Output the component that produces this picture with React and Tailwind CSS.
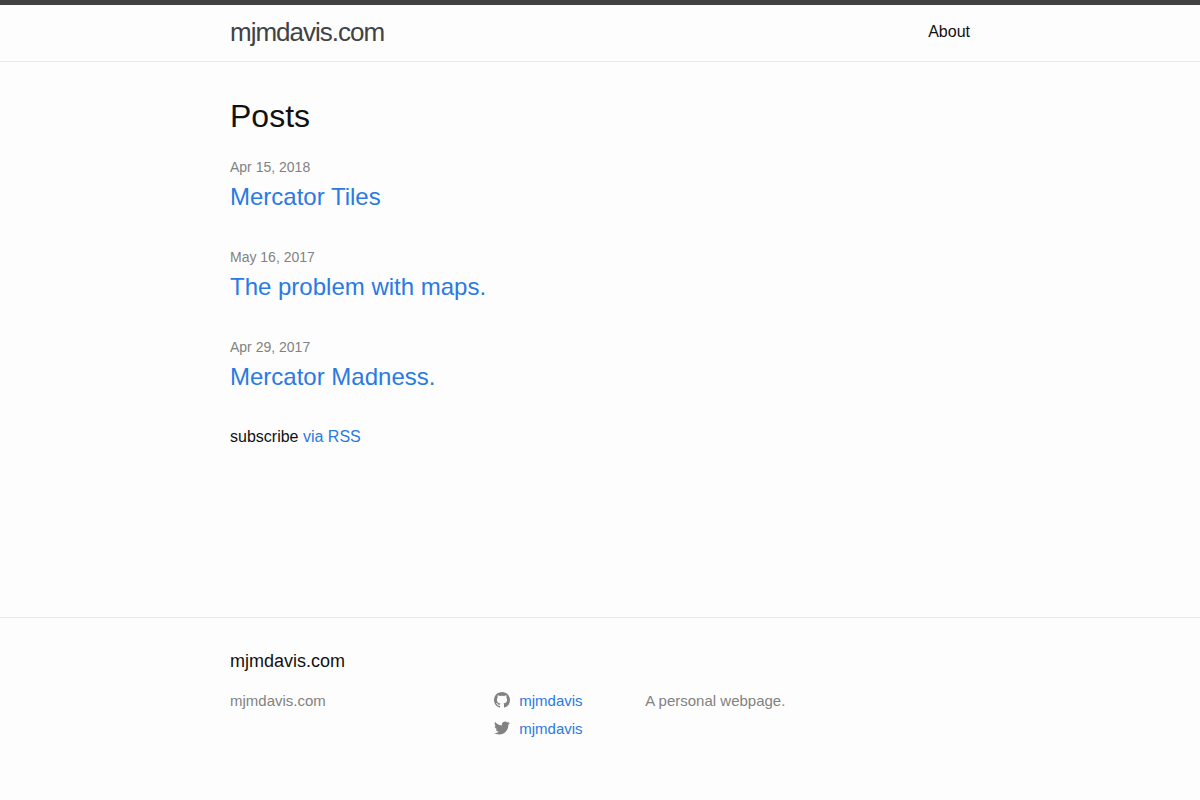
const posts = [
  { date: "Apr 15, 2018", title: "Mercator Tiles" },
  { date: "May 16, 2017", title: "The problem with maps." },
  { date: "Apr 29, 2017", title: "Mercator Madness." },
];

const GithubIcon = () => (
  <svg viewBox="0 0 16 16" aria-hidden="true" className="w-4 h-4 fill-[#828282]">
    <path
      fillRule="evenodd"
      clipRule="evenodd"
      d="M8 0C3.58 0 0 3.58 0 8c0 3.54 2.29 6.53 5.47 7.59.4.07.55-.17.55-.38 0-.19-.01-.82-.01-1.49-2.01.37-2.53-.49-2.69-.94-.09-.23-.48-.94-.82-1.13-.28-.15-.68-.52-.01-.53.63-.01 1.08.58 1.23.82.72 1.21 1.87.87 2.33.66.07-.52.28-.87.51-1.07-1.78-.2-3.64-.89-3.64-3.95 0-.87.31-1.59.82-2.15-.08-.2-.36-1.02.08-2.12 0 0 .67-.21 2.2.82.64-.18 1.32-.27 2-.27s1.36.09 2 .27c1.53-1.04 2.2-.82 2.2-.82.44 1.1.16 1.92.08 2.12.51.56.82 1.27.82 2.15 0 3.07-1.87 3.75-3.65 3.95.29.25.54.73.54 1.48 0 1.07-.01 1.93-.01 2.2 0 .21.15.46.55.38A8.01 8.01 0 0 0 16 8c0-4.42-3.58-8-8-8z"
    />
  </svg>
);

const TwitterIcon = () => (
  <svg viewBox="0 0 16 16" aria-hidden="true" className="w-4 h-4 fill-[#828282]">
    <path d="M15.969 3.058c-.586.26-1.217.436-1.878.515.675-.405 1.194-1.045 1.438-1.809-.632.375-1.332.647-2.076.793-.596-.636-1.446-1.033-2.387-1.033-1.806 0-3.27 1.464-3.27 3.27 0 .256.029.506.085.745C5.163 5.404 2.753 4.102 1.14 2.124c-.281.482-.442 1.044-.442 1.643 0 1.134.577 2.135 1.455 2.722-.536-.017-1.04-.164-1.481-.409v.041c0 1.584 1.127 2.906 2.623 3.206-.274.075-.563.115-.861.115-.211 0-.416-.021-.615-.059.416 1.299 1.624 2.245 3.055 2.271-1.119.877-2.529 1.4-4.061 1.4-.264 0-.524-.015-.78-.046 1.447.928 3.166 1.469 5.013 1.469 6.015 0 9.304-4.983 9.304-9.304 0-.142-.003-.283-.009-.423.639-.461 1.194-1.037 1.632-1.692z" />
  </svg>
);

const socials = [
  { name: "github", icon: GithubIcon, username: "mjmdavis" },
  { name: "twitter", icon: TwitterIcon, username: "mjmdavis" },
];

const Header = () => (
  <header className="border-t-5 border-b border-t-[#424242] border-b-[#e8e8e8]">
    <div className="max-w-[800px] mx-auto px-[30px] pb-[2px] flex justify-between leading-[54px]">
      <a href="#home" className="text-[26px] leading-[54px] tracking-[-1px] text-[#424242]">
        mjmdavis.com
      </a>
      <nav>
        <a href="#about">About</a>
      </nav>
    </div>
  </header>
);

const Footer = () => (
  <footer className="border-t border-[#e8e8e8] py-[30px]">
    <div className="max-w-[800px] mx-auto px-[30px]">
      <h2 className="text-lg leading-[27px] mb-[15px]">mjmdavis.com</h2>
      <div className="flex -ml-[15px] pb-[30px] text-[15px] leading-[22px] text-[#828282]">
        <p className="w-[35%] pl-[15px]">mjmdavis.com</p>
        <ul className="w-1/5 pl-[15px] space-y-[6px]">
          {socials.map(({ name, icon: Icon, username }) => (
            <li key={name} className="flex">
              <a href={`#${name}`} className="flex items-start gap-[9px] text-[#2a7ae2]">
                <span className="pt-[2px]">
                  <Icon />
                </span>
                <span>{username}</span>
              </a>
            </li>
          ))}
        </ul>
        <p className="w-[45%] pl-[15px]">A personal webpage.</p>
      </div>
    </div>
  </footer>
);

const App = () => {
  return (
    <div className="min-h-screen flex flex-col bg-[#fdfdfd] text-[#111] text-base font-['Liberation_Sans',Arial,sans-serif]">
      <Header />
      <main className="flex-1 w-full max-w-[800px] mx-auto p-[30px]">
        <h1 className="text-[32px] leading-[48px] mb-[15px]">Posts</h1>
        <ul>
          {posts.map((post) => (
            <li key={post.title} className="mb-[30px]">
              <time className="block text-sm leading-6 text-[#828282]">{post.date}</time>
              <h3 className="text-2xl leading-9">
                <a href="#post" className="text-[#2a7ae2]">
                  {post.title}
                </a>
              </h3>
            </li>
          ))}
        </ul>
        <p className="leading-6">
          subscribe{" "}
          <a href="#feed" className="text-[#2a7ae2]">
            via RSS
          </a>
        </p>
      </main>
      <Footer />
    </div>
  );
};

export default App;
